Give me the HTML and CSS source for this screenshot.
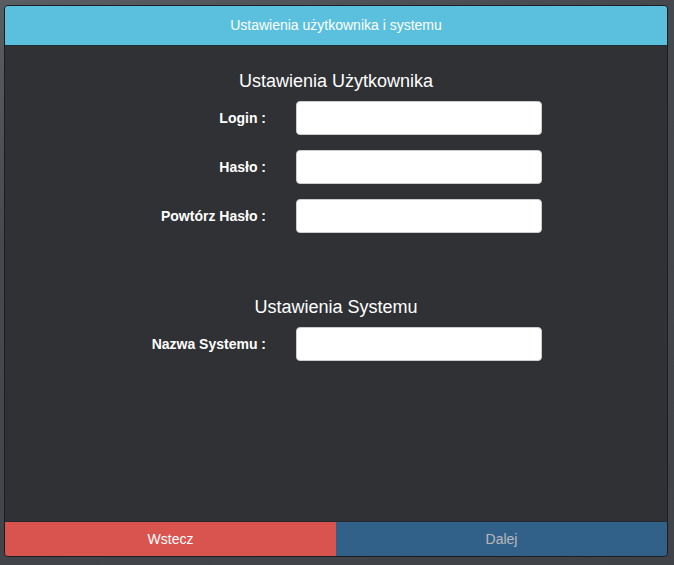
FILE: index.html
```html
<!DOCTYPE html>
<html lang="pl">
<head>
    <meta charset="UTF-8">
    <title>Ustawienia</title>
    <link rel="stylesheet" href="styles.css">
</head>
<body>
    <div class="modal">
        <div class="modal-header">Ustawienia użytkownika i systemu</div>

        <div class="modal-body">
            <h2>Ustawienia Użytkownika</h2>
            <div class="form-row">
                <label for="login">Login :</label>
                <input type="text" id="login">
            </div>
            <div class="form-row">
                <label for="haslo">Hasło :</label>
                <input type="password" id="haslo">
            </div>
            <div class="form-row">
                <label for="haslo2">Powtórz Hasło :</label>
                <input type="password" id="haslo2">
            </div>

            <h2 class="section-gap">Ustawienia Systemu</h2>
            <div class="form-row">
                <label for="nazwa">Nazwa Systemu :</label>
                <input type="text" id="nazwa">
            </div>
        </div>

        <div class="modal-footer">
            <button class="btn btn-back">Wstecz</button>
            <button class="btn btn-next" disabled>Dalej</button>
        </div>
    </div>
</body>
</html>
```

FILE: styles.css
```css
html, body {
    height: 100%;
}

body {
    margin: 0;
    padding: 5px 0 0 4px;
    box-sizing: border-box;
    font-family: "Liberation Sans", Arial, sans-serif;
    background: linear-gradient(160deg, #5a5d61 0%, #45484c 30%, #3f4246 100%);
}

.modal {
    width: 664px;
    height: 552px;
    box-sizing: border-box;
    border: 1px solid #1b1d20;
    border-radius: 4px;
    background-color: #2f3135;
    display: flex;
    flex-direction: column;
    overflow: hidden;
}

.modal-header {
    height: 39px;
    line-height: 39px;
    background-color: #5bc0de;
    border-bottom: 1px solid #1e2c38;
    color: #fff;
    font-size: 14px;
    text-align: center;
}

.modal-body {
    flex: 1;
    padding-top: 25px;
}

h2 {
    margin: 0 0 10px;
    font-size: 18px;
    font-weight: normal;
    line-height: 20px;
    color: #fff;
    text-align: center;
}

.section-gap {
    margin-top: 64px;
}

.form-row {
    display: grid;
    grid-template-columns: 250px 246px;
    column-gap: 30px;
    align-items: center;
    padding-left: 11px;
    margin-bottom: 15px;
}

.form-row label {
    color: #fff;
    font-size: 14px;
    font-weight: bold;
    text-align: right;
}

.form-row input {
    height: 34px;
    box-sizing: border-box;
    border: 1px solid #ccc;
    border-radius: 4px;
    background-color: #fff;
    padding: 6px 12px;
    font-size: 14px;
}

.modal-footer {
    display: flex;
    height: 34px;
    border-top: 1px solid #25282c;
}

.btn {
    flex: 1;
    border: none;
    margin: 0;
    font-family: inherit;
    font-size: 14px;
    color: #fff;
    cursor: pointer;
}

.btn-back {
    background-color: #d9534f;
}

.btn-next {
    background-color: #337ab7;
}

.btn-next:disabled {
    opacity: 0.65;
    cursor: not-allowed;
}
```
